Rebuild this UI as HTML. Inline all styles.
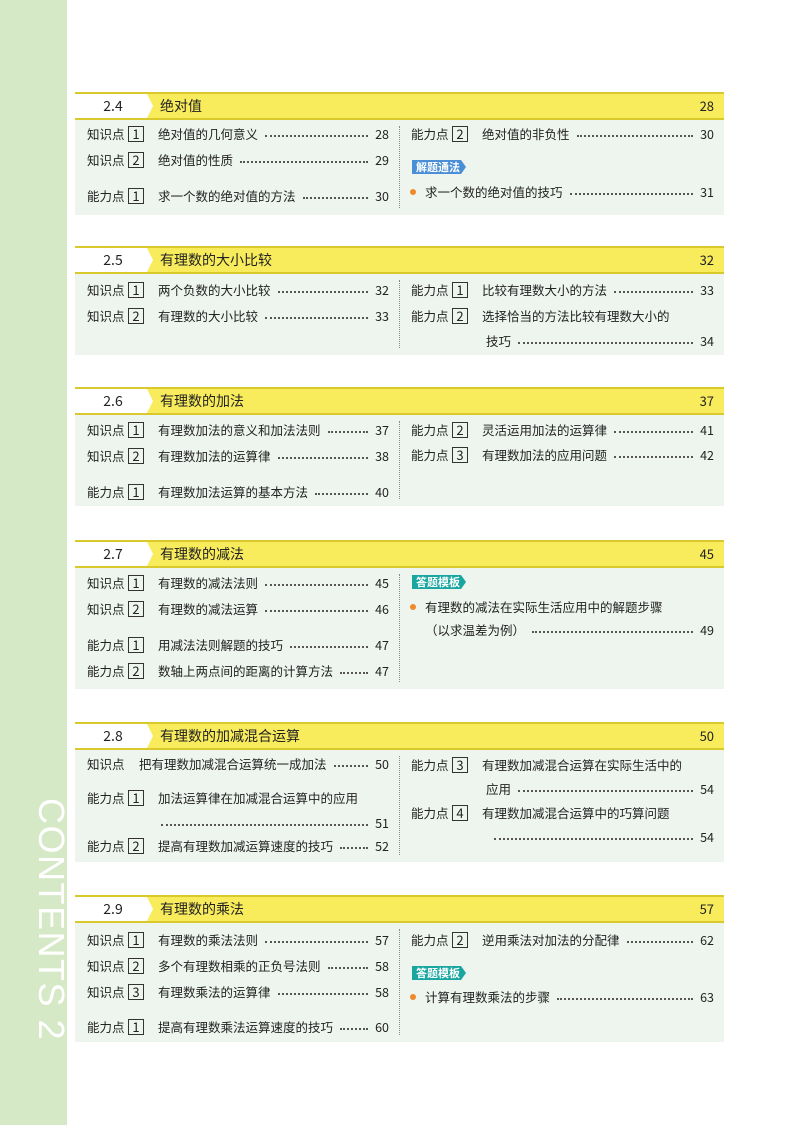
<!DOCTYPE html>
<html><head><meta charset="utf-8"><style>
body{margin:0;width:800px;height:1125px;background:#fff;position:relative;overflow:hidden;font-family:"Noto Sans CJK SC","Liberation Sans",sans-serif;color:#222}
.side{position:absolute;left:0;top:0;width:67px;height:1125px;background:#d6e9c6}
.ct{position:absolute;left:30px;top:798px;width:40px;height:260px;}
.ct span{position:absolute;left:0;top:0;transform-origin:0 0;transform:translate(39px,0) rotate(90deg);color:#fff;font-size:36px;white-space:nowrap;letter-spacing:1.5px;font-family:"Liberation Sans",sans-serif;line-height:36px}
.hd{position:absolute;left:75px;width:649px;height:24px;border-top:2px solid #d9c92c;border-bottom:2px solid #d9c92c;background:#fff}
.hd .y{position:absolute;left:72px;right:0;top:0;bottom:0;background:#f8ec5c;clip-path:polygon(0 0,100% 0,100% 100%,0 100%,6px 50%)}
.hd .no{position:absolute;left:0;width:76px;text-align:center;top:0;font-size:14px;line-height:24px}
.hd .ti{position:absolute;left:85px;top:0;font-size:14px;line-height:24px}
.hd .pg{position:absolute;right:10px;top:0;font-size:13px;line-height:24px}
.bd{position:absolute;left:75px;width:649px;background:#eef5ef}
.vd{position:absolute;left:399px;border-left:1.5px dotted #888}
.r{position:absolute;display:flex;align-items:center;height:20px;font-size:12.5px;white-space:nowrap;line-height:20px}
.l{width:38px}
.b{display:inline-block;width:16px;height:16px;border:1.3px solid #333;text-align:center;font-size:13px;margin-left:3px;box-sizing:border-box;line-height:14px}
.t{margin-left:14px}
.d{flex:1;border-bottom:2px dotted #555;margin:0 7px;height:0;align-self:center;margin-top:4px}
.n{font-size:12.5px}
.tag{position:absolute;left:412px;height:14px;color:#fff;font-size:11px;font-weight:bold;padding:0 6px 0 4px;line-height:14px;clip-path:polygon(0 0,calc(100% - 5px) 0,100% 50%,calc(100% - 5px) 100%,0 100%)}
.dot{position:absolute;left:410px;width:6px;height:6px;border-radius:50%;background:#ef8a2a}
</style></head><body>
<div class="side"></div>
<div class="ct"><span>CONTENTS 2</span></div>

<!-- 2.4 -->
<div class="hd" style="top:92px"><div class="y"></div><div class="no">2.4</div><div class="ti">绝对值</div><div class="pg">28</div></div>
<div class="bd" style="top:120px;height:95px"></div>
<div class="vd" style="top:126px;height:82px"></div>
<div class="r" style="left:87px;top:124px;width:302px"><span class="l">知识点</span><span class="b">1</span><span class="t">绝对值的几何意义</span><span class="d"></span><span class="n">28</span></div>
<div class="r" style="left:87px;top:150px;width:302px"><span class="l">知识点</span><span class="b">2</span><span class="t">绝对值的性质</span><span class="d"></span><span class="n">29</span></div>
<div class="r" style="left:87px;top:186px;width:302px"><span class="l">能力点</span><span class="b">1</span><span class="t">求一个数的绝对值的方法</span><span class="d"></span><span class="n">30</span></div>
<div class="r" style="left:411px;top:124px;width:303px"><span class="l">能力点</span><span class="b">2</span><span class="t">绝对值的非负性</span><span class="d"></span><span class="n">30</span></div>
<div class="tag" style="top:160px;background:#4a8fd6">解题通法</div>
<div class="dot" style="top:189px"></div>
<div class="r" style="left:425px;top:182px;width:289px"><span>求一个数的绝对值的技巧</span><span class="d"></span><span class="n">31</span></div>

<!-- 2.5 -->
<div class="hd" style="top:246px"><div class="y"></div><div class="no">2.5</div><div class="ti">有理数的大小比较</div><div class="pg">32</div></div>
<div class="bd" style="top:274px;height:81px"></div>
<div class="vd" style="top:280px;height:68px"></div>
<div class="r" style="left:87px;top:280px;width:302px"><span class="l">知识点</span><span class="b">1</span><span class="t">两个负数的大小比较</span><span class="d"></span><span class="n">32</span></div>
<div class="r" style="left:87px;top:306px;width:302px"><span class="l">知识点</span><span class="b">2</span><span class="t">有理数的大小比较</span><span class="d"></span><span class="n">33</span></div>
<div class="r" style="left:411px;top:280px;width:303px"><span class="l">能力点</span><span class="b">1</span><span class="t">比较有理数大小的方法</span><span class="d"></span><span class="n">33</span></div>
<div class="r" style="left:411px;top:306px;width:303px"><span class="l">能力点</span><span class="b">2</span><span class="t">选择恰当的方法比较有理数大小的</span></div>
<div class="r" style="left:486px;top:331px;width:228px"><span>技巧</span><span class="d"></span><span class="n">34</span></div>

<!-- 2.6 -->
<div class="hd" style="top:387px"><div class="y"></div><div class="no">2.6</div><div class="ti">有理数的加法</div><div class="pg">37</div></div>
<div class="bd" style="top:415px;height:91px"></div>
<div class="vd" style="top:421px;height:78px"></div>
<div class="r" style="left:87px;top:420px;width:302px"><span class="l">知识点</span><span class="b">1</span><span class="t">有理数加法的意义和加法法则</span><span class="d"></span><span class="n">37</span></div>
<div class="r" style="left:87px;top:446px;width:302px"><span class="l">知识点</span><span class="b">2</span><span class="t">有理数加法的运算律</span><span class="d"></span><span class="n">38</span></div>
<div class="r" style="left:87px;top:482px;width:302px"><span class="l">能力点</span><span class="b">1</span><span class="t">有理数加法运算的基本方法</span><span class="d"></span><span class="n">40</span></div>
<div class="r" style="left:411px;top:420px;width:303px"><span class="l">能力点</span><span class="b">2</span><span class="t">灵活运用加法的运算律</span><span class="d"></span><span class="n">41</span></div>
<div class="r" style="left:411px;top:445px;width:303px"><span class="l">能力点</span><span class="b">3</span><span class="t">有理数加法的应用问题</span><span class="d"></span><span class="n">42</span></div>

<!-- 2.7 -->
<div class="hd" style="top:540px"><div class="y"></div><div class="no">2.7</div><div class="ti">有理数的减法</div><div class="pg">45</div></div>
<div class="bd" style="top:568px;height:121px"></div>
<div class="vd" style="top:574px;height:108px"></div>
<div class="r" style="left:87px;top:573px;width:302px"><span class="l">知识点</span><span class="b">1</span><span class="t">有理数的减法法则</span><span class="d"></span><span class="n">45</span></div>
<div class="r" style="left:87px;top:599px;width:302px"><span class="l">知识点</span><span class="b">2</span><span class="t">有理数的减法运算</span><span class="d"></span><span class="n">46</span></div>
<div class="r" style="left:87px;top:635px;width:302px"><span class="l">能力点</span><span class="b">1</span><span class="t">用减法法则解题的技巧</span><span class="d"></span><span class="n">47</span></div>
<div class="r" style="left:87px;top:661px;width:302px"><span class="l">能力点</span><span class="b">2</span><span class="t">数轴上两点间的距离的计算方法</span><span class="d"></span><span class="n">47</span></div>
<div class="tag" style="top:575px;background:#19a6a0">答题模板</div>
<div class="dot" style="top:604px"></div>
<div class="r" style="left:425px;top:597px;width:289px"><span>有理数的减法在实际生活应用中的解题步骤</span></div>
<div class="r" style="left:425px;top:620px;width:289px"><span>（以求温差为例）</span><span class="d"></span><span class="n">49</span></div>

<!-- 2.8 -->
<div class="hd" style="top:722px"><div class="y"></div><div class="no">2.8</div><div class="ti">有理数的加减混合运算</div><div class="pg">50</div></div>
<div class="bd" style="top:750px;height:112px"></div>
<div class="vd" style="top:756px;height:99px"></div>
<div class="r" style="left:87px;top:754px;width:302px"><span class="l">知识点</span><span style="margin-left:14px">把有理数加减混合运算统一成加法</span><span class="d"></span><span class="n">50</span></div>
<div class="r" style="left:87px;top:788px;width:302px"><span class="l">能力点</span><span class="b">1</span><span class="t">加法运算律在加减混合运算中的应用</span></div>
<div class="r" style="left:161px;top:813px;width:228px"><span class="d" style="margin-left:0"></span><span class="n">51</span></div>
<div class="r" style="left:87px;top:836px;width:302px"><span class="l">能力点</span><span class="b">2</span><span class="t">提高有理数加减运算速度的技巧</span><span class="d"></span><span class="n">52</span></div>
<div class="r" style="left:411px;top:755px;width:303px"><span class="l">能力点</span><span class="b">3</span><span class="t">有理数加减混合运算在实际生活中的</span></div>
<div class="r" style="left:486px;top:779px;width:228px"><span>应用</span><span class="d"></span><span class="n">54</span></div>
<div class="r" style="left:411px;top:803px;width:303px"><span class="l">能力点</span><span class="b">4</span><span class="t">有理数加减混合运算中的巧算问题</span></div>
<div class="r" style="left:486px;top:827px;width:228px"><span class="d" style="margin-left:8px"></span><span class="n">54</span></div>

<!-- 2.9 -->
<div class="hd" style="top:895px"><div class="y"></div><div class="no">2.9</div><div class="ti">有理数的乘法</div><div class="pg">57</div></div>
<div class="bd" style="top:923px;height:119px"></div>
<div class="vd" style="top:929px;height:106px"></div>
<div class="r" style="left:87px;top:930px;width:302px"><span class="l">知识点</span><span class="b">1</span><span class="t">有理数的乘法法则</span><span class="d"></span><span class="n">57</span></div>
<div class="r" style="left:87px;top:956px;width:302px"><span class="l">知识点</span><span class="b">2</span><span class="t">多个有理数相乘的正负号法则</span><span class="d"></span><span class="n">58</span></div>
<div class="r" style="left:87px;top:982px;width:302px"><span class="l">知识点</span><span class="b">3</span><span class="t">有理数乘法的运算律</span><span class="d"></span><span class="n">58</span></div>
<div class="r" style="left:87px;top:1017px;width:302px"><span class="l">能力点</span><span class="b">1</span><span class="t">提高有理数乘法运算速度的技巧</span><span class="d"></span><span class="n">60</span></div>
<div class="r" style="left:411px;top:930px;width:303px"><span class="l">能力点</span><span class="b">2</span><span class="t">逆用乘法对加法的分配律</span><span class="d"></span><span class="n">62</span></div>
<div class="tag" style="top:966px;background:#19a6a0">答题模板</div>
<div class="dot" style="top:994px"></div>
<div class="r" style="left:425px;top:987px;width:289px"><span>计算有理数乘法的步骤</span><span class="d"></span><span class="n">63</span></div>
</body></html>
